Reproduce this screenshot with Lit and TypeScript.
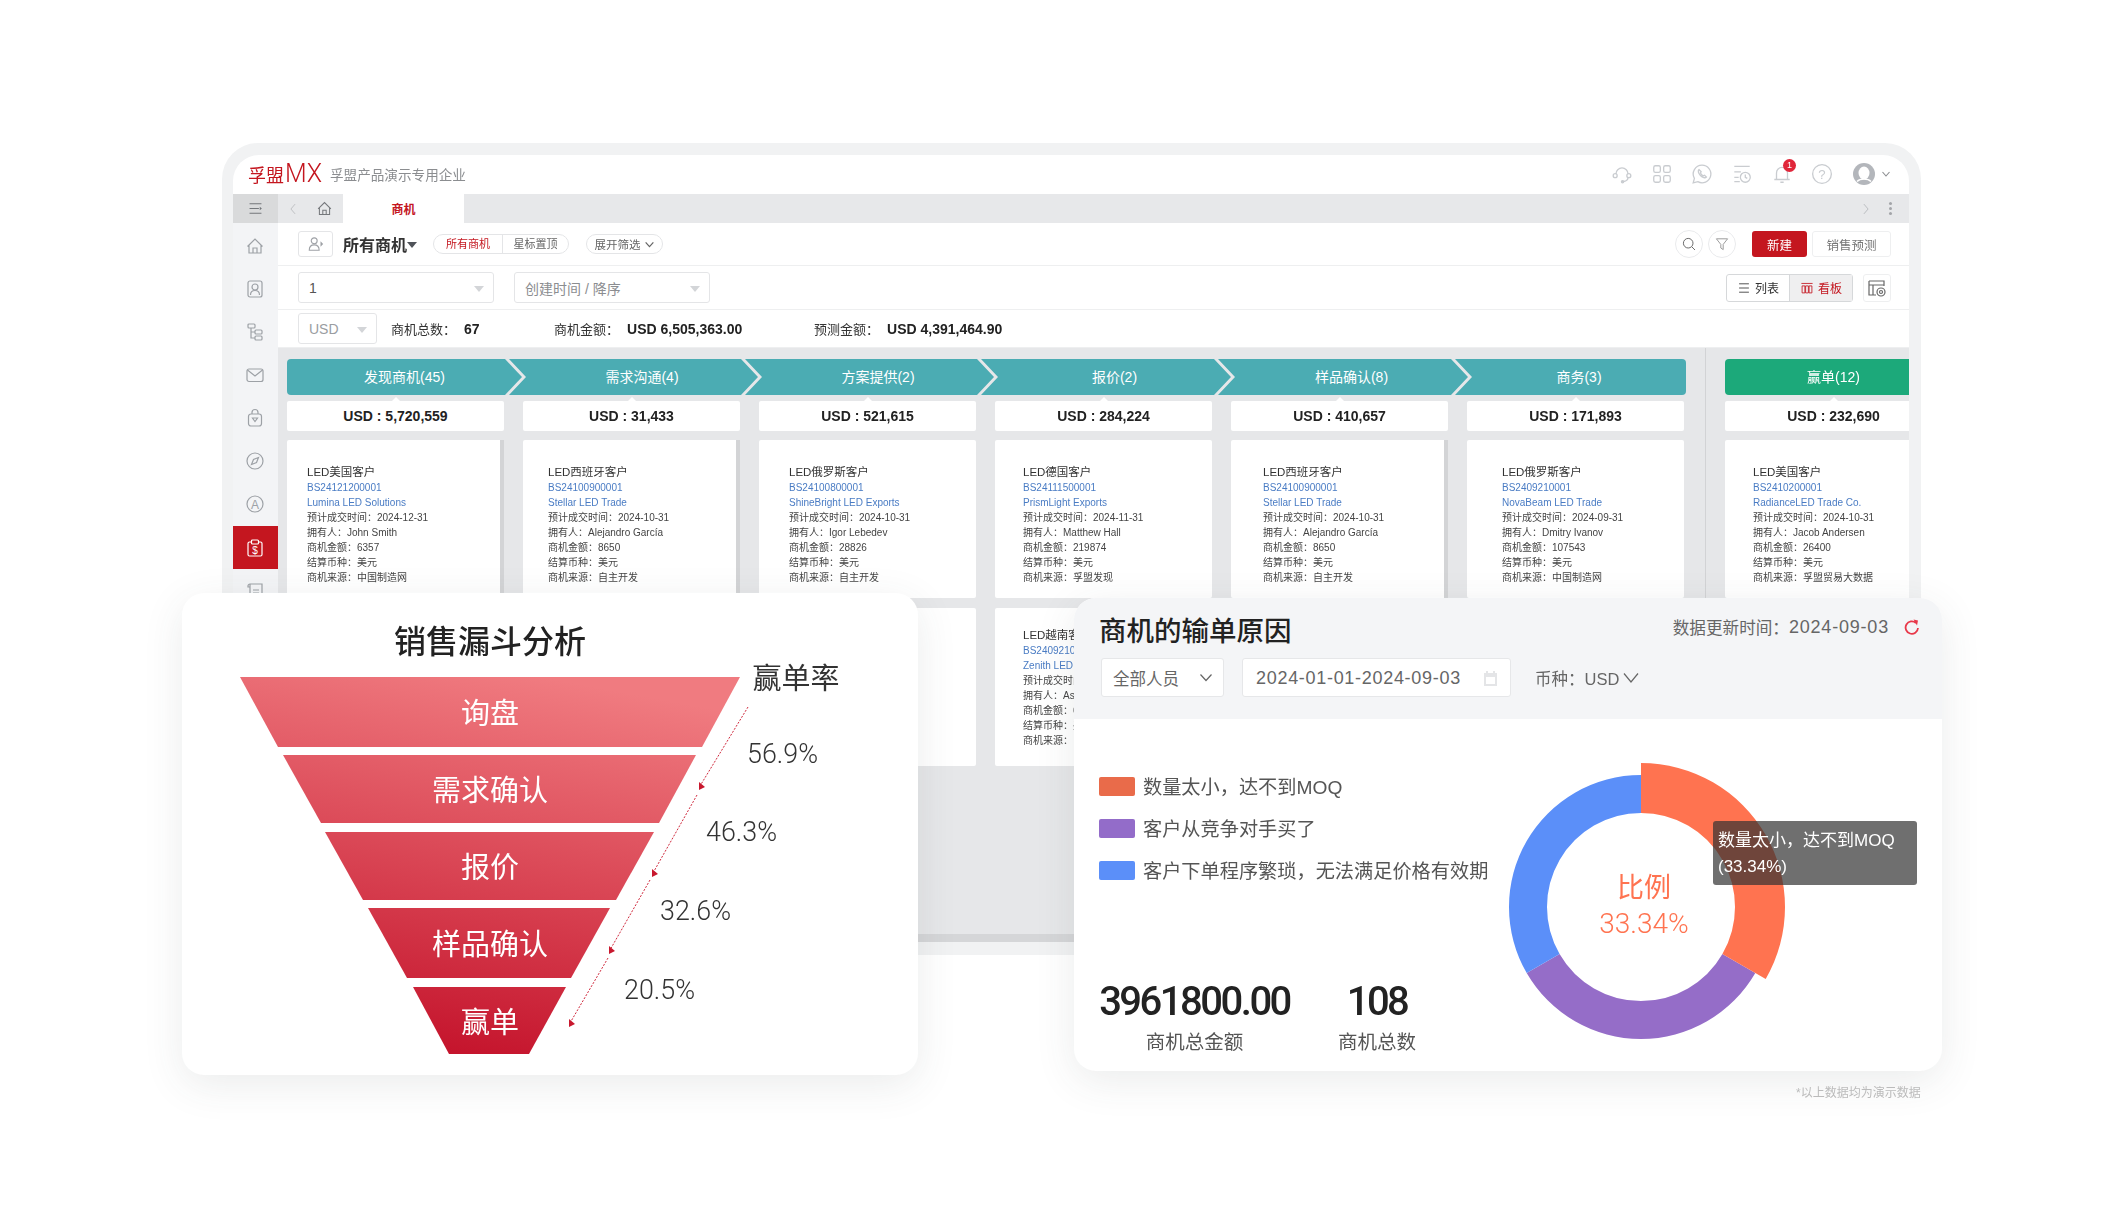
import {LitElement, html, svg, css} from 'lit';
import {customElement} from 'lit/decorators.js';

const ic = (body: unknown, size = 20) => html`<svg class="ic" width=${size} height=${size} viewBox="0 0 20 20">${body}</svg>`;

const icons = {
  menu: svg`<path d="M3 4.500H17M3 10H14M3 15.500H17"/><path d="M15 8l2.500 2-2.500 2z" fill="currentColor" stroke="none"/>`,
  home: svg`<path d="M2.500 10.500L10 3l7.500 7.500M4 9v8h12V9M8 17v-5h4v5"/>`,
  contact: svg`<rect x="3" y="2" width="14" height="16" rx="2"/><circle cx="10" cy="8" r="3"/><path d="M5.500 16c0-3 2-4.500 4.500-4.500s4.500 1.500 4.500 4.500"/>`,
  org: svg`<rect x="3" y="2" width="7" height="4" rx="1"/><rect x="10" y="8" width="7" height="4" rx="1"/><rect x="10" y="14" width="7" height="4" rx="1"/><path d="M6 6v10h4M6 10h4"/>`,
  mail: svg`<rect x="2" y="4" width="16" height="12.500" rx="2"/><path d="M2.500 5L10 11l7.500-6"/>`,
  bag: svg`<rect x="3.500" y="6" width="13" height="12" rx="2.500"/><path d="M7 6V4.500a3 3 0 0 1 6 0V6M7.500 10h5L10 13.500z"/>`,
  compass: svg`<circle cx="10" cy="10" r="8"/><path d="M13.500 6.500L11.500 11.500 6.500 13.500 8.500 8.500z"/>`,
  letter: svg`<circle cx="10" cy="10" r="8"/><text x="10" y="14.500" text-anchor="middle" class="glyph">A</text>`,
  clip: svg`<rect x="3" y="4" width="14" height="14" rx="1.500"/><rect x="6.500" y="2" width="7" height="4" rx="1" fill="#c4161f"/><text x="10" y="15.500" text-anchor="middle" class="glyph small">$</text>`,
  scroll: svg`<path d="M5 3h12v3M5 3a2 2 0 0 0-2 2v1h2zM5 3v14h12V6M8 9h6M8 12h6"/>`,
  headset: svg`<path d="M4.500 10a5.500 5.500 0 0 1 11 0M15.500 13c0 2.500-1.500 3.500-4 3.800"/><circle cx="3.800" cy="11.500" r="1.800"/><circle cx="16.200" cy="11.500" r="1.800"/><circle cx="10.500" cy="17" r="1" fill="currentColor"/>`,
  grid: svg`<rect x="2.500" y="2.500" width="6" height="6" rx="1.500"/><rect x="11.500" y="2.500" width="6" height="6" rx="1.500"/><rect x="2.500" y="11.500" width="6" height="6" rx="1.500"/><rect x="11.500" y="11.500" width="6" height="6" rx="1.500"/>`,
  chat: svg`<path d="M10 2a8 8 0 1 1-3.800 15L2 18l1.100-4A8 8 0 0 1 10 2z"/><path d="M7.300 6c-1.200 1-.7 3.200 1.300 5.300s4.300 2.700 5.400 1.500l-1.700-1.700-1.200.6c-1-.5-2-1.500-2.500-2.600l.6-1.200z"/>`,
  history: svg`<path d="M3 3h14M3 8h6M3 13h4M3 17h5"/><circle cx="13" cy="13" r="4.500"/><path d="M13 10.500V13l1.800 1"/>`,
  bell: svg`<path d="M5 15V9a5 5 0 0 1 10 0v6M3 15h14M8.500 17.500h3"/>`,
  help: svg`<circle cx="10" cy="10" r="8.500"/><text x="10" y="14.500" text-anchor="middle" class="glyph">?</text>`,
  person: svg`<circle cx="8" cy="6.500" r="3.300"/><path d="M2.500 17c0-4 2.500-6 5.500-6s5.500 2 5.500 6z"/><path d="M15 7l3 3-3 3z" fill="currentColor" stroke="none"/>`,
  search: svg`<circle cx="9" cy="9" r="6"/><path d="M13.500 13.500L17.500 17.500"/>`,
  funnel: svg`<path d="M3 3.500h14l-5.500 7V17l-3-2v-4.500z"/>`,
  lines: svg`<path d="M3 4h14M3 10h14M3 16h14"/>`,
  board: svg`<path d="M2 3.500h16M3 7h4v10H3zM8 7h4v10H8zM13 7h4v10h-4z"/>`,
  columns: svg`<path d="M2 3h15v5M2 3v14h7M2 7h15M6 7v10"/><circle cx="14" cy="14" r="4"/><circle cx="14" cy="14" r="1.500"/>`,
  left: svg`<path d="M13 3L7 10l6 7"/>`,
  right: svg`<path d="M7 3l6 7-6 7"/>`,
};

const chevron = (w = 10) => html`<svg class="ic chev" width=${w} height=${w} viewBox="0 0 10 10"><path d="M1.500 3L5 7l3.500-4"/></svg>`;

interface Deal {
  name: string;
  code: string;
  company: string;
  date: string;
  owner: string;
  amount: string;
  source: string;
  pad: number;
}

interface Stage {
  label: string;
  total: string;
  width: number;
  scroll?: boolean;
  deal: Deal;
  next?: Deal;
}

const stages: Stage[] = [
  {label: '发现商机(45)', total: 'USD : 5,720,559', width: 235, scroll: true,
    deal: {name: 'LED美国客户', code: 'BS24121200001', company: 'Lumina LED Solutions', date: '2024-12-31', owner: 'John Smith', amount: '6357', source: '中国制造网', pad: 20}},
  {label: '需求沟通(4)', total: 'USD : 31,433', width: 249, scroll: true,
    deal: {name: 'LED西班牙客户', code: 'BS24100900001', company: 'Stellar LED Trade', date: '2024-10-31', owner: 'Alejandro García', amount: '8650', source: '自主开发', pad: 25}},
  {label: '方案提供(2)', total: 'USD : 521,615', width: 249,
    deal: {name: 'LED俄罗斯客户', code: 'BS24100800001', company: 'ShineBright LED Exports', date: '2024-10-31', owner: 'Igor Lebedev', amount: '28826', source: '自主开发', pad: 30}},
  {label: '报价(2)', total: 'USD : 284,224', width: 250,
    deal: {name: 'LED德国客户', code: 'BS24111500001', company: 'PrismLight Exports', date: '2024-11-31', owner: 'Matthew Hall', amount: '219874', source: '孚盟发现', pad: 28},
    next: {name: 'LED越南客户', code: 'BS24092100001', company: 'Zenith LED Imports', date: '2024-09-30', owner: 'Ashok Nguyen', amount: '64200', source: '自主开发', pad: 28}},
  {label: '样品确认(8)', total: 'USD : 410,657', width: 250, scroll: true,
    deal: {name: 'LED西班牙客户', code: 'BS24100900001', company: 'Stellar LED Trade', date: '2024-10-31', owner: 'Alejandro García', amount: '8650', source: '自主开发', pad: 32}},
  {label: '商务(3)', total: 'USD : 171,893', width: 231,
    deal: {name: 'LED俄罗斯客户', code: 'BS2409210001', company: 'NovaBeam LED Trade', date: '2024-09-31', owner: 'Dmitry Ivanov', amount: '107543', source: '中国制造网', pad: 35}},
];

const wonDeal: Deal = {name: 'LED美国客户', code: 'BS2410200001', company: 'RadianceLED Trade Co.', date: '2024-10-31', owner: 'Jacob Andersen', amount: '26400', source: '孚盟贸易大数据', pad: 28};

@customElement('crm-window')
class CrmWindow extends LitElement {
  static styles = css`
    :host { display: block; }
    .frame { box-sizing: border-box; width: 1699px; height: 812px; padding: 12px 12px 13px 11px; background: #f1f2f3; border-radius: 36px 36px 0 0; }
    .win { height: 787px; background: #fff; border-radius: 26px 26px 0 0; overflow: hidden; display: flex; flex-direction: column; filter: blur(0.4px); }
    .ic { fill: none; stroke: currentColor; stroke-width: 1.2; flex: none; display: block; }
    .ic .glyph { font-size: 12px; fill: currentColor; stroke: none; }
    .ic .glyph.small { font-size: 10px; }
    .chev { stroke-width: 1.1; }

    .titlebar { height: 39px; flex: none; display: flex; align-items: center; box-sizing: border-box; padding: 0 18px 2px 15px; color: #c9ccd0; }
    .logo { color: #c4161f; font-size: 18px; display: flex; align-items: center; width: 82px; }
    .logo b { font-weight: 300; font-family: Roboto, sans-serif; font-size: 25px; margin-left: 1px; }
    .company { color: #8b8d90; font-size: 13.600px; flex: 1; }
    .tools { display: flex; align-items: center; gap: 18px; }
    .bell { position: relative; }
    .badge { position: absolute; right: -3px; top: -4px; width: 13px; height: 13px; border-radius: 50%; background: #e0263a; color: #fff; font-size: 9px; line-height: 13px; text-align: center; }
    .avatar { display: block; margin-left: 2px; }
    .tools .chev { margin-left: -12px; color: #8b8d90; }

    .tabbar { height: 29px; flex: none; display: flex; align-items: center; background: #e7e8ea; color: #9a9da1; }
    .menu { width: 45px; height: 100%; background: #d9dadb; display: flex; align-items: center; justify-content: center; color: #74777b; }
    .back { width: 65px; display: flex; align-items: center; gap: 15.500px; padding-left: 8px; box-sizing: border-box; color: #74777b; }
    .back .ic:first-child { color: #b7b9bc; }
    .tab { width: 121px; height: 100%; background: #fff; color: #c4161f; font-size: 12px; font-weight: 700; display: flex; align-items: center; justify-content: center; }
    .tabend { flex: 1; display: flex; justify-content: flex-end; align-items: center; gap: 16px; padding-right: 17px; color: #b3b5b9; }
    .dots { width: 3px; height: 3px; border-radius: 50%; background: #a3a5a9; box-shadow: 0 -5px #a3a5a9, 0 5px #a3a5a9; }

    .body { flex: 1; display: flex; min-height: 0; }
    .side { width: 45px; flex: none; box-sizing: border-box; padding-top: 1px; background: #f3f4f6; color: #9da1a6; }
    .nav { height: 43.150px; padding-right: 1px; box-sizing: border-box; display: flex; align-items: center; justify-content: center; }
    .nav.on { background: #c4161f; color: #fff; }
    .main { flex: 1; min-width: 0; display: flex; flex-direction: column; overflow: hidden; }

    .row { flex: none; display: flex; align-items: center; padding: 0 18px 0 20px; border-bottom: 1px solid #eeeff0; box-sizing: border-box; }
    .r1 { height: 43px; }
    .r2 { height: 44px; }
    .r3 { height: 38px; padding-bottom: 1px; font-size: 13px; color: #333; }
    .box { border: 1px solid #e4e5e7; border-radius: 3px; box-sizing: border-box; background: #fff; }
    .who { width: 35px; height: 26px; display: flex; align-items: center; justify-content: center; color: #9ea1a6; }
    .who .ic { width: 18px; height: 18px; }
    .title { font-size: 16px; font-weight: 700; color: #333; margin-left: 10px; }
    .caret { width: 0; height: 0; border: 5px solid transparent; border-top: 6px solid #4f5359; border-bottom: 0; margin: 2px 0 0 0; }
    .seg { display: flex; width: 136px; height: 20px; margin-left: 16px; border: 1px solid #e4e5e7; border-radius: 10px; box-sizing: border-box; font-size: 11px; line-height: 18px; color: #666; }
    .seg span { flex: 1; text-align: center; }
    .seg span:first-child { flex: none; width: 68px; color: #c4161f; border-right: 1px solid #e4e5e7; }
    .pill { width: 77px; height: 20px; margin-left: 17px; border: 1px solid #e4e5e7; border-radius: 10px; box-sizing: border-box; font-size: 11.500px; color: #666; display: flex; align-items: center; justify-content: center; gap: 3px; }
    .pill .chev { width: 11px; height: 11px; }
    .grow { flex: 1; }
    .circle { width: 28px; height: 28px; border: 1px solid #e9eaec; border-radius: 50%; box-sizing: border-box; display: flex; align-items: center; justify-content: center; color: #666; margin-left: 5px; }
    .circle + .circle { color: #999; }
    .circle .ic { width: 16px; height: 16px; }
    .btn { height: 26px; border-radius: 3px; box-sizing: border-box; font-size: 12.500px; display: flex; align-items: center; justify-content: center; }
    .new { width: 55px; background: #c4161f; color: #fff; margin-left: 16px; }
    .fore { width: 79px; margin-left: 5px; border: 1px solid #eeeff0; color: #777; }
    .select { position: relative; height: 31px; display: flex; align-items: center; padding: 1px 0 0 10px; font-size: 14px; color: #555; }
    .select::after { content: ''; position: absolute; right: 9px; top: 13px; border: 5px solid transparent; border-top: 6px solid #d3d5d8; border-bottom: 0; }
    .s1 { width: 196px; }
    .s2 { width: 196px; margin-left: 20px; color: #8b8d90; }
    .s3 { width: 79px; color: #9a9da1; }
    .toggle { display: flex; width: 127px; height: 28px; border: 1px solid #d6d8da; border-radius: 3px; box-sizing: border-box; font-size: 12px; }
    .toggle span { display: flex; align-items: center; justify-content: center; gap: 4px; }
    .toggle span:first-child { width: 62px; color: #333; }
    .toggle span:last-child { flex: 1; background: #efeff0; color: #c4161f; border-left: 1px solid #d6d8da; }
    .toggle .ic { width: 14px; height: 14px; }
    .cfg { width: 28px; height: 28px; margin-left: 10px; display: flex; align-items: center; justify-content: center; color: #666; border-color: #eeeff0; }
    .stat { display: flex; align-items: baseline; white-space: nowrap; }
    .stat b { font-size: 14px; font-weight: 700; color: #222; margin-left: 8px; }
    .count { width: 163px; margin-left: 14px; }
    .sum { width: 260px; }

    .board { flex: 1; min-height: 0; display: flex; background: #e6e7e9; overflow: hidden; }
    .pipeline { flex: none; width: 1398px; margin-left: 9px; padding-top: 11px; }
    .stages { display: flex; }
    .stage { flex: none; height: 36px; margin-left: -13px; padding-bottom: 2px; background: #4bacb3; color: #fff; font-size: 14px; display: flex; align-items: center; justify-content: center; clip-path: polygon(0 0, calc(100% - 17px) 0, 100% 50%, calc(100% - 17px) 100%, 0 100%, 17px 50%); padding-left: 17px; box-sizing: border-box; }
    .stage.first { margin-left: 0; border-radius: 4px 0 0 4px; padding-left: 0; clip-path: polygon(0 0, calc(100% - 17px) 0, 100% 50%, calc(100% - 17px) 100%, 0 100%); }
    .stage.last { clip-path: polygon(0 0, 100% 0, 100% 100%, 0 100%, 17px 50%); border-radius: 0 4px 4px 0; }
    .cols { display: grid; grid-template-columns: repeat(6, 217px); gap: 19px; }
    .total { position: relative; height: 30px; margin: 6px 0 9px; background: #fff; border-radius: 2px; font-size: 14px; font-weight: 700; color: #222; text-align: center; line-height: 31px; }
    .total::before { content: ''; position: absolute; left: 50%; top: -4px; margin-left: -4px; border: 4px solid transparent; border-top: 0; border-bottom: 4px solid #fff; }
    .card { box-sizing: border-box; height: 158px; margin-bottom: 10px; padding-top: 19px; background: #fff; border-radius: 2px; font-size: 10px; line-height: 15px; color: #444; white-space: nowrap; overflow: hidden; }
    .card.top { padding-top: 24px; }
    .bar { border-right: 4px solid #d3d4d6; border-radius: 2px 0 0 2px; }
    .card .name { font-size: 11.500px; line-height: 16px; color: #333; }
    .card .link { color: #4a7cc4; }
    .sep { flex: none; width: 1px; margin: 0 19px 0 20px; background: #d2d3d5; }
    .won { flex: none; width: 217px; padding-top: 11px; }
    .won .stage { margin-left: 0; padding: 0 0 2px; border-radius: 4px 0 0 4px; background: #1ca97a; clip-path: none; }
    .track { height: 8px; flex: none; background: #d5d6d8; }
  `;

  private deal(d: Deal | undefined, cls: string) {
    if (!d) return html`<div class="card ${cls}"></div>`;
    return html`<div class="card ${cls}" style="padding-left:${d.pad}px">
      <div class="name">${d.name}</div>
      <div class="link">${d.code}</div>
      <div class="link">${d.company}</div>
      <div>预计成交时间：${d.date}</div>
      <div>拥有人：${d.owner}</div>
      <div>商机金额：${d.amount}</div>
      <div>结算币种：美元</div>
      <div>商机来源：${d.source}</div>
    </div>`;
  }

  render() {
    const nav = [icons.home, icons.contact, icons.org, icons.mail, icons.bag, icons.compass, icons.letter];
    return html`<div class="frame"><div class="win">
      <div class="titlebar">
        <div class="logo">孚盟<b>MX</b></div>
        <div class="company">孚盟产品演示专用企业</div>
        <div class="tools">
          ${ic(icons.headset, 22)}${ic(icons.grid, 22)}${ic(icons.chat, 22)}${ic(icons.history, 22)}
          <div class="bell">${ic(icons.bell, 22)}<span class="badge">1</span></div>
          ${ic(icons.help, 22)}
          <svg class="avatar" width="22" height="22" viewBox="0 0 22 22">
            <circle cx="11" cy="11" r="11" fill="#b3b6bb"/>
            <ellipse cx="11" cy="10" rx="5.500" ry="6.500" fill="#fff"/>
            <path d="M4 18.500c2-2 4-2.500 7-2.500s5 .5 7 2.500" fill="none" stroke="#fff" stroke-width="1.500"/>
          </svg>
          ${chevron()}
        </div>
      </div>
      <div class="tabbar">
        <div class="menu">${ic(icons.menu, 17)}</div>
        <div class="back">${ic(icons.left, 14)}${ic(icons.home, 17)}</div>
        <div class="tab">商机</div>
        <div class="tabend">${ic(icons.right, 14)}<span class="dots"></span></div>
      </div>
      <div class="body">
        <div class="side">
          ${nav.map(i => html`<div class="nav">${ic(i)}</div>`)}
          <div class="nav on">${ic(icons.clip)}</div>
          <div class="nav">${ic(icons.scroll)}</div>
        </div>
        <div class="main">
          <div class="row r1">
            <div class="box who">${ic(icons.person)}</div>
            <div class="title">所有商机</div><div class="caret"></div>
            <div class="seg"><span>所有商机</span><span>星标置顶</span></div>
            <div class="pill">展开筛选 ${chevron()}</div>
            <div class="grow"></div>
            <div class="circle">${ic(icons.search)}</div>
            <div class="circle">${ic(icons.funnel)}</div>
            <div class="btn new">新建</div>
            <div class="btn fore">销售预测</div>
          </div>
          <div class="row r2">
            <div class="box select s1">1</div>
            <div class="box select s2">创建时间 / 降序</div>
            <div class="grow"></div>
            <div class="toggle"><span>${ic(icons.lines)}列表</span><span>${ic(icons.board)}看板</span></div>
            <div class="box cfg">${ic(icons.columns)}</div>
          </div>
          <div class="row r3">
            <div class="box select s3">USD</div>
            <div class="stat count">商机总数：<b>67</b></div>
            <div class="stat sum">商机金额：<b>USD 6,505,363.00</b></div>
            <div class="stat">预测金额：<b>USD 4,391,464.90</b></div>
          </div>
          <div class="board">
            <div class="pipeline">
              <div class="stages">
                ${stages.map((s, i) => html`<div class="stage ${i === 0 ? 'first' : i === stages.length - 1 ? 'last' : ''}" style="width:${s.width}px">${s.label}</div>`)}
              </div>
              <div class="cols">
                ${stages.map(s => html`<div>
                  <div class="total">${s.total}</div>
                  ${this.deal(s.deal, s.scroll ? 'top bar' : 'top')}
                  ${this.deal(s.next, '')}
                </div>`)}
              </div>
            </div>
            <div class="sep"></div>
            <div class="won">
              <div class="stage">赢单(12)</div>
              <div class="total">USD : 232,690</div>
              ${this.deal(wonDeal, 'top')}
              ${this.deal(undefined, '')}
            </div>
          </div>
          <div class="track"></div>
        </div>
      </div>
    </div></div>`;
  }
}

interface Slice { label: string; x: number[]; y: number[]; }

const slices: Slice[] = [
  {label: '询盘', x: [240, 740, 702, 278], y: [677, 747]},
  {label: '需求确认', x: [283, 696, 659, 321], y: [755, 823]},
  {label: '报价', x: [325, 654, 616, 363], y: [832, 900]},
  {label: '样品确认', x: [368, 610, 571, 407], y: [908, 978]},
  {label: '赢单', x: [413, 566, 529, 449], y: [987, 1054]},
];

const rates = [
  {text: '56.9%', x: 747, y: 763, from: [748, 707], to: [700, 786]},
  {text: '46.3%', x: 706, y: 841, from: [697, 795], to: [653, 873]},
  {text: '32.6%', x: 660, y: 920, from: [650, 880], to: [610, 950]},
  {text: '20.5%', x: 624, y: 999, from: [608, 958], to: [570, 1023]},
];

@customElement('funnel-card')
class FunnelCard extends LitElement {
  static styles = css`
    :host { display: block; }
    .card { width: 736px; height: 482px; background: #fff; border-radius: 22px; box-shadow: 0 10px 40px rgba(60, 64, 70, 0.1); overflow: hidden; }
    svg { display: block; }
    .title { font-size: 32px; font-weight: 500; fill: #222; text-anchor: middle; }
    .rate { font-size: 29px; fill: #333; text-anchor: middle; }
    .label { font-size: 29px; fill: #fff; text-anchor: middle; dominant-baseline: central; }
    .pct { font-family: Roboto, sans-serif; font-weight: 300; font-size: 28px; fill: #333; }
    .flow { stroke: #d0283c; stroke-width: 1; stroke-dasharray: 2 1.500; fill: none; }
    .tip { fill: #c8182e; }
  `;

  render() {
    return html`<div class="card">
      <svg width="736" height="482" viewBox="182 593 736 482">
        <defs>
          <linearGradient id="fn" gradientUnits="userSpaceOnUse" x1="540" y1="677" x2="470" y2="1054">
            <stop offset="0" stop-color="#f07b80"/>
            <stop offset="1" stop-color="#c5152d"/>
          </linearGradient>
        </defs>
        <text class="title" x="490" y="653">销售漏斗分析</text>
        <text class="rate" x="796" y="689">赢单率</text>
        ${slices.map(s => svg`
          <polygon fill="url(#fn)" points="${s.x[0]},${s.y[0]} ${s.x[1]},${s.y[0]} ${s.x[2]},${s.y[1]} ${s.x[3]},${s.y[1]}"/>
          <text class="label" x="490" y=${(s.y[0] + s.y[1]) / 2 + 2}>${s.label}</text>`)}
        ${rates.map(r => svg`
          <line class="flow" x1=${r.from[0]} y1=${r.from[1]} x2=${r.to[0]} y2=${r.to[1]}/>
          <polygon class="tip" points="${r.to[0] - 1},${r.to[1] - 4} ${r.to[0] + 5},${r.to[1] + 1} ${r.to[0] - 1},${r.to[1] + 4}"/>
          <text class="pct" x=${r.x} y=${r.y} textLength="71" lengthAdjust="spacingAndGlyphs">${r.text}</text>`)}
      </svg>
    </div>`;
  }
}

// donut centre sits at 150,150 inside its 300px svg
const polar = (r: number, deg: number) => {
  const a = (deg * Math.PI) / 180;
  return `${(150 + r * Math.sin(a)).toFixed(2)} ${(150 - r * Math.cos(a)).toFixed(2)}`;
};
const ring = (outer: number, from: number, to: number) =>
  `M${polar(outer, from)}A${outer} ${outer} 0 0 1 ${polar(outer, to)}L${polar(94, to)}A94 94 0 0 0 ${polar(94, from)}Z`;

const reasons = [
  {label: '数量太小，达不到MOQ', color: '#e96b4a'},
  {label: '客户从竞争对手买了', color: '#936cc9'},
  {label: '客户下单程序繁琐，无法满足价格有效期', color: '#5b8ff9'},
];

@customElement('loss-card')
class LossCard extends LitElement {
  static styles = css`
    :host { display: block; }
    .card { position: relative; width: 868px; height: 473px; background: #fff; border-radius: 22px; box-shadow: 0 10px 40px rgba(60, 64, 70, 0.1); overflow: hidden; }
    .head { box-sizing: border-box; height: 121px; padding: 10px 22px 0 25px; background: #f4f5f7; }
    .top { display: flex; justify-content: space-between; align-items: center; height: 42px; }
    h2 { margin: 0; font-size: 27.500px; font-weight: 500; color: #222; }
    .update { font-size: 16.600px; color: #666; display: flex; align-items: center; margin-top: -4px; }
    .update span { font-size: 18px; letter-spacing: 0.8px; margin-right: 15px; }
    .update svg { fill: none; stroke: #e8384a; stroke-width: 1.800; }
    .update svg .head-tip { fill: #e8384a; stroke: none; }
    .filters { display: flex; align-items: center; margin: 8px 0 0 2px; }
    .field { box-sizing: border-box; height: 39px; background: #fff; border: 1px solid #e6e7e9; border-radius: 3px; font-size: 16.500px; color: #666; display: flex; align-items: center; justify-content: space-between; }
    .who { width: 123px; padding: 0 10px 0 11px; }
    .range { width: 269px; margin-left: 18px; padding: 1px 12px 0 13px; font-size: 18px; letter-spacing: 0.7px; }
    .cur { margin-left: 24px; font-size: 16.500px; color: #666; display: flex; align-items: center; gap: 4px; }
    .chev { fill: none; stroke: #666; stroke-width: 1.200; }
    .body { display: flex; }
    .left { box-sizing: border-box; width: 417px; padding: 56px 0 0 25px; }
    .legend { display: flex; align-items: center; height: 21px; margin-bottom: 21px; font-size: 19.200px; color: #555; white-space: nowrap; }
    .swatch { width: 36px; height: 19px; border-radius: 2px; margin: 1px 8px 0 0; flex: none; }
    .stats { display: flex; margin-top: 100px; text-align: center; }
    .n1 { width: 191px; }
    .n2 { width: 80px; margin-left: 47px; }
    .num { font-family: Roboto, sans-serif; font-weight: 500; font-size: 40px; letter-spacing: -2.500px; line-height: 44px; color: #222; white-space: nowrap; }
    .cap { font-size: 19.500px; line-height: 28px; margin-top: 4px; color: #555; white-space: nowrap; }
    .donut { display: block; margin-top: 38px; }
    .ratio { font-size: 27px; fill: #ff7350; text-anchor: middle; }
    .ratio.pct { font-family: Roboto, sans-serif; font-weight: 300; font-size: 28px; }
    .tooltip { position: absolute; left: 639px; top: 223px; box-sizing: border-box; width: 204px; height: 64px; padding: 2px 5px 0; background: rgba(50, 50, 50, 0.7); border-radius: 3px; color: #fff; font-size: 17px; line-height: 26px; display: flex; flex-direction: column; justify-content: center; white-space: nowrap; }
  `;

  render() {
    return html`<div class="card">
      <div class="head">
        <div class="top">
          <h2>商机的输单原因</h2>
          <div class="update">数据更新时间：<span>2024-09-03</span>
            <svg width="16" height="18" viewBox="0 0 16 18"><path d="M12 5A6.200 6.200 0 1 0 14 10"/><path class="head-tip" d="M9.500 1.500L14 2.500l-1 5z"/></svg>
          </div>
        </div>
        <div class="filters">
          <div class="field who">全部人员 <svg class="chev" width="14" height="14" viewBox="0 0 14 14"><path d="M1.500 3.500L7 9.500l5.500-6"/></svg></div>
          <div class="field range">2024-01-01-2024-09-03
            <svg width="15" height="17" viewBox="0 0 15 17"><path fill="#e4e5e7" d="M1 3h13v13H1zM3 1h2v3H3zM10 1h2v3h-2z"/><path fill="#fff" d="M3 7h9v7H3z"/></svg>
          </div>
          <div class="cur">币种：USD <svg class="chev" width="16" height="14" viewBox="0 0 16 14"><path d="M1 2.500L8 11l7-8.500"/></svg></div>
        </div>
      </div>
      <div class="body">
        <div class="left">
          ${reasons.map(r => html`<div class="legend"><span class="swatch" style="background:${r.color}"></span>${r.label}</div>`)}
          <div class="stats">
            <div class="n1"><div class="num">3961800.00</div><div class="cap">商机总金额</div></div>
            <div class="n2"><div class="num">108</div><div class="cap">商机总数</div></div>
          </div>
        </div>
        <svg class="donut" width="300" height="300" viewBox="0 0 300 300">
          <path fill="#956dc8" d=${ring(132, 120, 240)}/>
          <path fill="#5b8ff9" d=${ring(132, 240, 360)}/>
          <path fill="#ff7350" d=${ring(144, 0, 120)}/>
          <text class="ratio" x="153" y="140">比例</text>
          <text class="ratio pct" x="153" y="176">33.34%</text>
        </svg>
      </div>
      <div class="tooltip"><span>数量太小，达不到MOQ</span><span>(33.34%)</span></div>
    </div>`;
  }
}

@customElement('app-root')
class AppRoot extends LitElement {
  static styles = css`
    :host { display: block; position: relative; width: 2125px; height: 1230px; background: #fff; overflow: hidden; font-family: "Liberation Sans", "Noto Sans CJK SC", sans-serif; }
    .window { padding: 143px 0 0 222px; }
    .funnel { position: absolute; left: 182px; top: 593px; }
    .loss { position: absolute; left: 1074px; top: 598px; }
    .note { position: absolute; left: 1796px; top: 1083px; font-size: 12px; color: #bbb; white-space: nowrap; }
  `;

  render() {
    return html`
      <div class="window"><crm-window></crm-window></div>
      <funnel-card class="funnel"></funnel-card>
      <loss-card class="loss"></loss-card>
      <div class="note">*以上数据均为演示数据</div>
    `;
  }
}
